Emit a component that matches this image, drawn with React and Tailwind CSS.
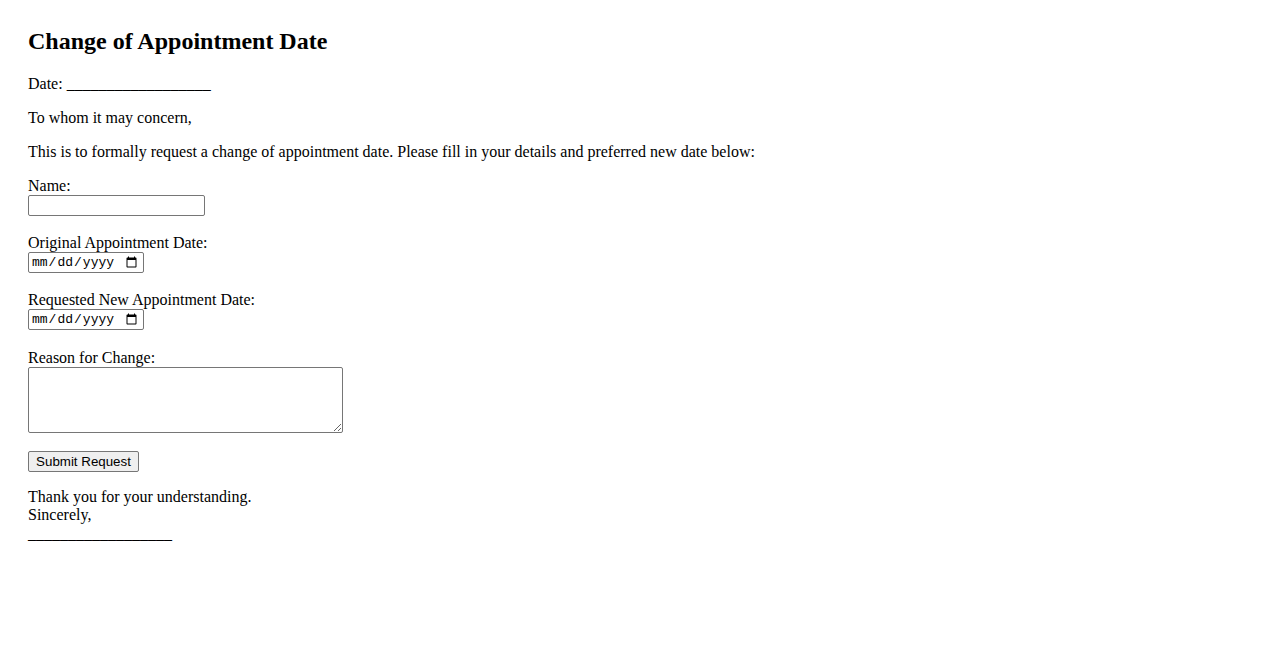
export default function App() {
  return (
    <div className="min-h-[650px] bg-white text-black px-[28px] pt-[28px] font-['Liberation_Serif','Times_New_Roman',serif] text-[16px] leading-[18px]">
      <h2 className="text-[24px] font-bold leading-[27px]">Change of Appointment Date</h2>
      <p className="mt-[20px]">Date: __________________</p>
      <p className="mt-[16px]">To whom it may concern,</p>
      <p className="mt-[16px]">
        This is to formally request a change of appointment date. Please fill in your details and preferred new date below:
      </p>
      <form className="mt-[16px] flex flex-col items-start" onSubmit={(e) => e.preventDefault()}>
        <label htmlFor="name" className="block h-[18px]">Name:</label>
        <input
          id="name"
          type="text"
          className="block w-[177px] h-[21px] px-[2px] py-[1px] border border-[#767676] rounded-[2px] bg-white font-['Liberation_Sans',Arial,sans-serif] text-[13.33px]"
        />

        <label htmlFor="orig" className="block h-[18px] mt-[18px]">Original Appointment Date:</label>
        <input
          id="orig"
          type="date"
          className="block w-[116px] h-[21px] pl-[2px] pr-[3px] py-[1px] border border-[#767676] rounded-[2px] bg-white font-['Liberation_Mono','Courier_New',monospace] text-[13px] leading-[17px]"
        />

        <label htmlFor="req" className="block h-[18px] mt-[18px]">Requested New Appointment Date:</label>
        <input
          id="req"
          type="date"
          className="block w-[116px] h-[21px] pl-[2px] pr-[3px] py-[1px] border border-[#767676] rounded-[2px] bg-white font-['Liberation_Mono','Courier_New',monospace] text-[13px] leading-[17px]"
        />

        <label htmlFor="reason" className="block h-[18px] mt-[19px]">Reason for Change:</label>
        <textarea
          id="reason"
          className="block w-[315px] h-[66px] p-[2px] border border-[#767676] rounded-[2px] bg-white resize font-['Liberation_Mono','Courier_New',monospace] text-[13.33px]"
        />

        <button
          type="submit"
          className="mt-[18px] h-[21px] w-[111px] px-[6px] border border-[#767676] rounded-[2px] bg-[#efefef] text-black font-['Liberation_Sans',Arial,sans-serif] text-[13.33px] leading-[15px]"
        >
          Submit Request
        </button>
      </form>
      <div className="mt-[16px]">
        <p>Thank you for your understanding.</p>
        <p>Sincerely,</p>
        <p className="mt-[1px]">__________________</p>
      </div>
    </div>
  );
}
